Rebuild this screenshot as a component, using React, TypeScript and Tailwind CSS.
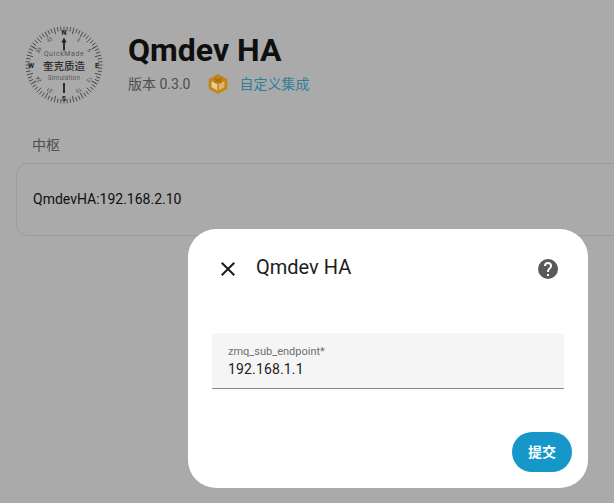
const ticks = Array.from({ length: 72 }, (_, i) => i * 5);
const labels = [
  { a: 30, t: "3" },
  { a: 60, t: "6" },
  { a: 120, t: "12" },
  { a: 150, t: "15" },
  { a: 210, t: "21" },
  { a: 240, t: "24" },
  { a: 300, t: "30" },
  { a: 330, t: "33" },
];

function Logo() {
  return (
    <svg viewBox="0 0 80 80" className="h-20 w-20 shrink-0">
      {ticks.map((a) => (
        <line
          key={a}
          x1="40"
          y1="1.5"
          x2="40"
          y2={a % 15 === 0 ? 8 : 6}
          stroke="#4a4a4a"
          strokeWidth="0.9"
          transform={`rotate(${a} 40 40)`}
        />
      ))}
      {labels.map((l) => (
        <text
          key={l.a}
          x="40"
          y="12.5"
          fontSize="5"
          fill="#3a3a3a"
          textAnchor="middle"
          fontFamily="Roboto, sans-serif"
          transform={`rotate(${l.a} 40 40)`}
        >
          {l.t}
        </text>
      ))}
      <g fontFamily="Roboto, sans-serif" fontWeight="700" fill="#222" textAnchor="middle" fontSize="7">
        <text x="40" y="10">N</text>
        <text x="40" y="76">S</text>
        <text x="73" y="42.5">E</text>
        <text x="7" y="42.5">W</text>
      </g>
      <path d="M40 12.5l-2.6 5h1.7v8h1.8v-8h1.7z" fill="#222" />
      <rect x="39.1" y="58" width="1.8" height="10" fill="#222" />
      <text x="40" y="31" fontSize="7" letterSpacing="0.6" fill="#555" textAnchor="middle" fontFamily="Roboto, sans-serif">
        QuickMade
      </text>
      <text x="40" y="44.5" fontSize="10.5" fontWeight="500" fill="#2b2b2b" textAnchor="middle" fontFamily="'Noto Sans CJK SC', sans-serif">
        奎克质造
      </text>
      <text x="40" y="54.5" fontSize="6.4" letterSpacing="0.2" fill="#5c5c5c" textAnchor="middle" fontFamily="Roboto, sans-serif">
        Simulation
      </text>
    </svg>
  );
}

function PackageIcon() {
  return (
    <svg viewBox="0 0 24 24" className="h-5 w-5">
      <path d="M12 1 22.5 6.7v10.6L12 23 1.5 17.3V6.7z" fill="#c4851a" stroke="#c4851a" strokeWidth="1.5" strokeLinejoin="round" />
      <path d="M12 12.6 4.3 8.4v7.4l7.7 4.2z" fill="#e8cd97" />
      <path d="M12 12.6 19.7 8.4v7.4L12 20z" fill="#dfb565" />
      <path d="M7.5 5.2 16 10M16.5 5.2 8 10" stroke="#a96f10" strokeWidth="2.2" fill="none" />
      <path d="M12 12.6V20" stroke="#c4851a" strokeWidth="1.8" fill="none" />
    </svg>
  );
}

export default function App() {
  return (
    <div className="relative h-[503px] w-[614px] overflow-hidden bg-[#aaaaaa] font-['Roboto',sans-serif]">
      <div className="flex items-center gap-6 pl-6 pt-[25px]">
        <Logo />
        <div className="flex flex-col pb-[7px]">
          <h1 className="text-[32px] leading-10 font-bold text-[#0f0f0f]">Qmdev HA</h1>
          <div className="mt-1 flex items-center text-sm leading-5 text-[#4e4e4e] font-['Roboto','Noto_Sans_CJK_SC',sans-serif]">
            <span>版本 0.3.0</span>
            <span className="mr-[11px] ml-[18px]">
              <PackageIcon />
            </span>
            <span className="text-[#2f7f97]">自定义集成</span>
          </div>
        </div>
      </div>

      <div className="mt-[30px] pl-8 text-sm leading-5 text-[#4e4e4e] font-['Roboto','Noto_Sans_CJK_SC',sans-serif]">中枢</div>

      <div className="mt-2 ml-4 -mr-8 flex h-[73px] items-center rounded-xl border border-[#9c9c9c] pb-0.5 pl-4 text-sm text-[#0f0f0f]">
        QmdevHA:192.168.2.10
      </div>

      <div className="absolute top-[229px] left-[188px] flex h-[259px] w-[400px] flex-col rounded-[28px] bg-white">
        <div className="flex items-center px-7 pt-7">
          <svg viewBox="0 0 24 24" className="h-6 w-6 text-[#1c1c1c]" fill="currentColor">
            <path d="M19 6.41 17.59 5 12 10.59 6.41 5 5 6.41 10.59 12 5 17.59 6.41 19 12 13.41 17.59 19 19 17.59 13.41 12z" />
          </svg>
          <span className="ml-4 flex-1 self-start text-xl leading-5 text-[#1c1c1c]">Qmdev HA</span>
          <svg viewBox="0 0 24 24" className="h-6 w-6 text-[#595959]" fill="currentColor">
            <path d="M15.07 11.25 14.17 12.17C13.45 12.89 13 13.5 13 15H11V14.5C11 13.39 11.45 12.39 12.17 11.67L13.41 10.41C13.78 10.05 14 9.55 14 9C14 7.89 13.1 7 12 7A2 2 0 0 0 10 9H8A4 4 0 0 1 12 5A4 4 0 0 1 16 9C16 9.88 15.64 10.67 15.07 11.25M13 19H11V17H13M12 2A10 10 0 0 0 2 12A10 10 0 0 0 12 22A10 10 0 0 0 22 12C22 6.47 17.5 2 12 2Z" />
          </svg>
        </div>

        <div className="mx-6 mt-[52px] flex h-[56px] flex-col rounded-t border-b border-[#8b8b8b] bg-[#f5f5f5] px-4 pt-3">
          <span className="text-[11px] leading-[14px] text-[#6f6f6f]">zmq_sub_endpoint*</span>
          <span className="text-sm leading-5 tracking-[0.15px] text-[#212121]">192.168.1.1</span>
        </div>

        <div className="mt-auto flex justify-end pr-4 pb-4">
          <button className="h-10 w-[60px] rounded-[20px] bg-[#1597c9] text-sm font-bold text-white font-['Roboto','Noto_Sans_CJK_SC',sans-serif]">
            提交
          </button>
        </div>
      </div>
    </div>
  );
}
